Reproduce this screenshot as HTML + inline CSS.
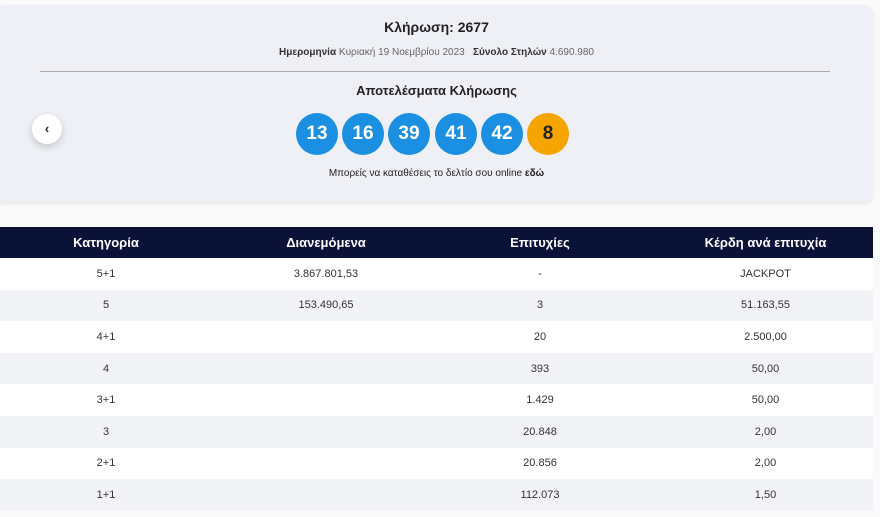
<!DOCTYPE html>
<html><head><meta charset="utf-8"><style>
body{margin:0;width:880px;height:517px;background:#fafafb;font-family:"Liberation Sans Narrow","Liberation Sans","DejaVu Sans",sans-serif;color:#222;position:relative;overflow:hidden}
.card{position:absolute;left:0;top:5px;width:873px;height:197px;background:#eef0f6;border-radius:0 8px 8px 0;box-shadow:0 2px 4px rgba(0,0,0,.08)}
.t{position:absolute;left:0;width:873px;text-align:center}
hr{position:absolute;left:40px;top:66px;width:790px;margin:0;border:0;border-top:1px solid #aaa}
.ball{position:absolute;top:108px;width:42px;height:42px;border-radius:50%;background:#1b8fe2;color:#fff;font-size:19px;font-weight:bold;text-align:center;line-height:42px}
.prev{position:absolute;left:32px;top:114px;width:30px;height:30px;border-radius:50%;background:#fff;box-shadow:0 3px 8px rgba(0,0,0,.18);text-align:center;line-height:29px;font-size:13px;font-weight:bold}
table{position:absolute;left:0;top:227px;width:873px;border-collapse:collapse;table-layout:fixed;font-size:11px;color:#333}
th{background:#0b1238;color:#fff;font-size:13px;height:31px;padding:0;font-weight:bold}
td{text-align:center;height:31.6px;padding:0;line-height:12px}
td:last-child,th:last-child{padding-left:18px}
tr:nth-child(even) td{background:#fff}
tr:nth-child(odd) td{background:#f2f3f7}
</style></head><body>
<div class="card">
<div class="t" style="top:14px;font-size:14px;font-weight:bold">Κλήρωση: 2677</div>
<div class="t" style="top:42px;font-size:10px;color:#666"><b style="color:#333">Ημερομηνία</b> Κυριακή 19 Νοεμβρίου 2023 &nbsp; <b style="color:#333">Σύνολο Στηλών</b> 4.690.980</div>
<hr>
<div class="t" style="top:78px;font-size:13px;font-weight:bold">Αποτελέσματα Κλήρωσης</div>
<div class="ball" style="left:296px">13</div>
<div class="ball" style="left:342px">16</div>
<div class="ball" style="left:388px">39</div>
<div class="ball" style="left:435px">41</div>
<div class="ball" style="left:481px">42</div>
<div class="ball" style="left:527px;background:#f6a500;color:#222">8</div>
<div class="t" style="top:163px;font-size:10px">Μπορείς να καταθέσεις το δελτίο σου online <b>εδώ</b></div>
</div>
<div class="prev">&lsaquo;</div>
<table>
<colgroup><col style="width:212px"><col style="width:228px"><col style="width:200px"><col style="width:233px"></colgroup>
<tr><th>Κατηγορία</th><th>Διανεμόμενα</th><th>Επιτυχίες</th><th>Κέρδη ανά επιτυχία</th></tr>
<tr><td>5+1</td><td>3.867.801,53</td><td>-</td><td>JACKPOT</td></tr>
<tr><td>5</td><td>153.490,65</td><td>3</td><td>51.163,55</td></tr>
<tr><td>4+1</td><td></td><td>20</td><td>2.500,00</td></tr>
<tr><td>4</td><td></td><td>393</td><td>50,00</td></tr>
<tr><td>3+1</td><td></td><td>1.429</td><td>50,00</td></tr>
<tr><td>3</td><td></td><td>20.848</td><td>2,00</td></tr>
<tr><td>2+1</td><td></td><td>20.856</td><td>2,00</td></tr>
<tr><td>1+1</td><td></td><td>112.073</td><td>1,50</td></tr>
</table>
</body></html>
